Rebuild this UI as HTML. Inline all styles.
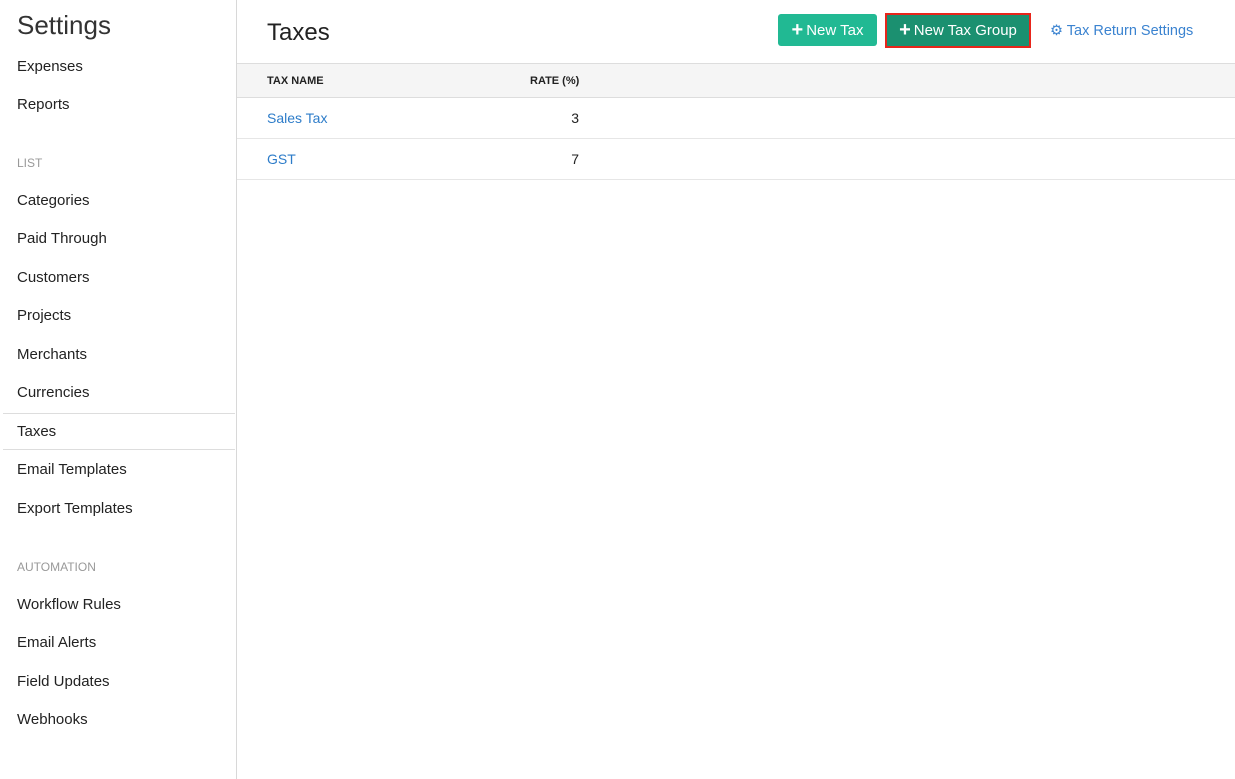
<!DOCTYPE html>
<html><head><style>
body{margin:0;width:1235px;height:779px;font-family:"Liberation Sans",sans-serif;background:#fff;position:relative;overflow:hidden;color:#222}
.side{position:absolute;left:0;top:0;width:236px;height:779px;border-right:1px solid #d8d8d8}
.side h1{position:absolute;left:17px;top:10px;margin:0;font-weight:400;font-size:26px;color:#333}
.it{position:absolute;left:17px;font-size:15px;color:#222}
.sec{position:absolute;left:17px;font-size:12px;color:#999}
.act{position:absolute;left:3px;width:232px;top:413px;height:35px;border-top:1px solid #ddd;border-bottom:1px solid #ddd}
.main h2{position:absolute;left:267px;top:19px;margin:0;font-weight:400;font-size:24px;color:#222}
.btn{position:absolute;color:#fff;font-size:15px;display:flex;align-items:center;justify-content:center;box-sizing:border-box}
.hdr{position:absolute;left:237px;right:0;top:63px;height:35px;background:#f5f5f5;border-top:1px solid #ddd;border-bottom:1px solid #ddd;box-sizing:border-box}
.th{position:absolute;font-size:11px;font-weight:700;top:75px;color:#222}
.row{position:absolute;left:237px;right:0;height:41px;border-bottom:1px solid #e6e6e6;box-sizing:border-box}
.a{position:absolute;left:267px;font-size:14px;color:#2d7cc9}
.n{position:absolute;left:560px;width:19px;text-align:right;font-size:14px}
</style></head><body>
<div class="side">
<h1>Settings</h1>
<div class="it" style="top:58px">Expenses</div>
<div class="it" style="top:96px">Reports</div>
<div class="sec" style="top:156px">LIST</div>
<div class="it" style="top:192px">Categories</div>
<div class="it" style="top:230px">Paid Through</div>
<div class="it" style="top:269px">Customers</div>
<div class="it" style="top:307px">Projects</div>
<div class="it" style="top:346px">Merchants</div>
<div class="it" style="top:384px">Currencies</div>
<div class="act"></div>
<div class="it" style="top:423px">Taxes</div>
<div class="it" style="top:461px">Email Templates</div>
<div class="it" style="top:500px">Export Templates</div>
<div class="sec" style="top:560px">AUTOMATION</div>
<div class="it" style="top:596px">Workflow Rules</div>
<div class="it" style="top:634px">Email Alerts</div>
<div class="it" style="top:673px">Field Updates</div>
<div class="it" style="top:711px">Webhooks</div>
</div>
<div class="main">
<h2>Taxes</h2>
<div class="btn" style="left:778px;top:14px;width:99px;height:32px;background:#21b993;border-radius:3px"><b style="font-size:20px;margin-right:3px">+</b>New Tax</div>
<div class="btn" style="left:885px;top:13px;width:146px;height:35px;background:#1b9070;border:2px solid #e8251b"><b style="font-size:20px;margin-right:3px">+</b>New Tax Group</div>
<div style="position:absolute;left:1050px;top:23px;font-size:14.5px;color:#3b83d0">⚙ Tax Return Settings</div>
<div class="hdr"></div>
<div class="th" style="left:267px">TAX NAME</div>
<div class="th" style="left:530px">RATE (%)</div>
<div class="row" style="top:98px"></div>
<div class="row" style="top:139px"></div>
<div class="a" style="top:110px">Sales Tax</div><div class="n" style="top:110px">3</div>
<div class="a" style="top:151px">GST</div><div class="n" style="top:151px">7</div>
</div>
</body></html>
